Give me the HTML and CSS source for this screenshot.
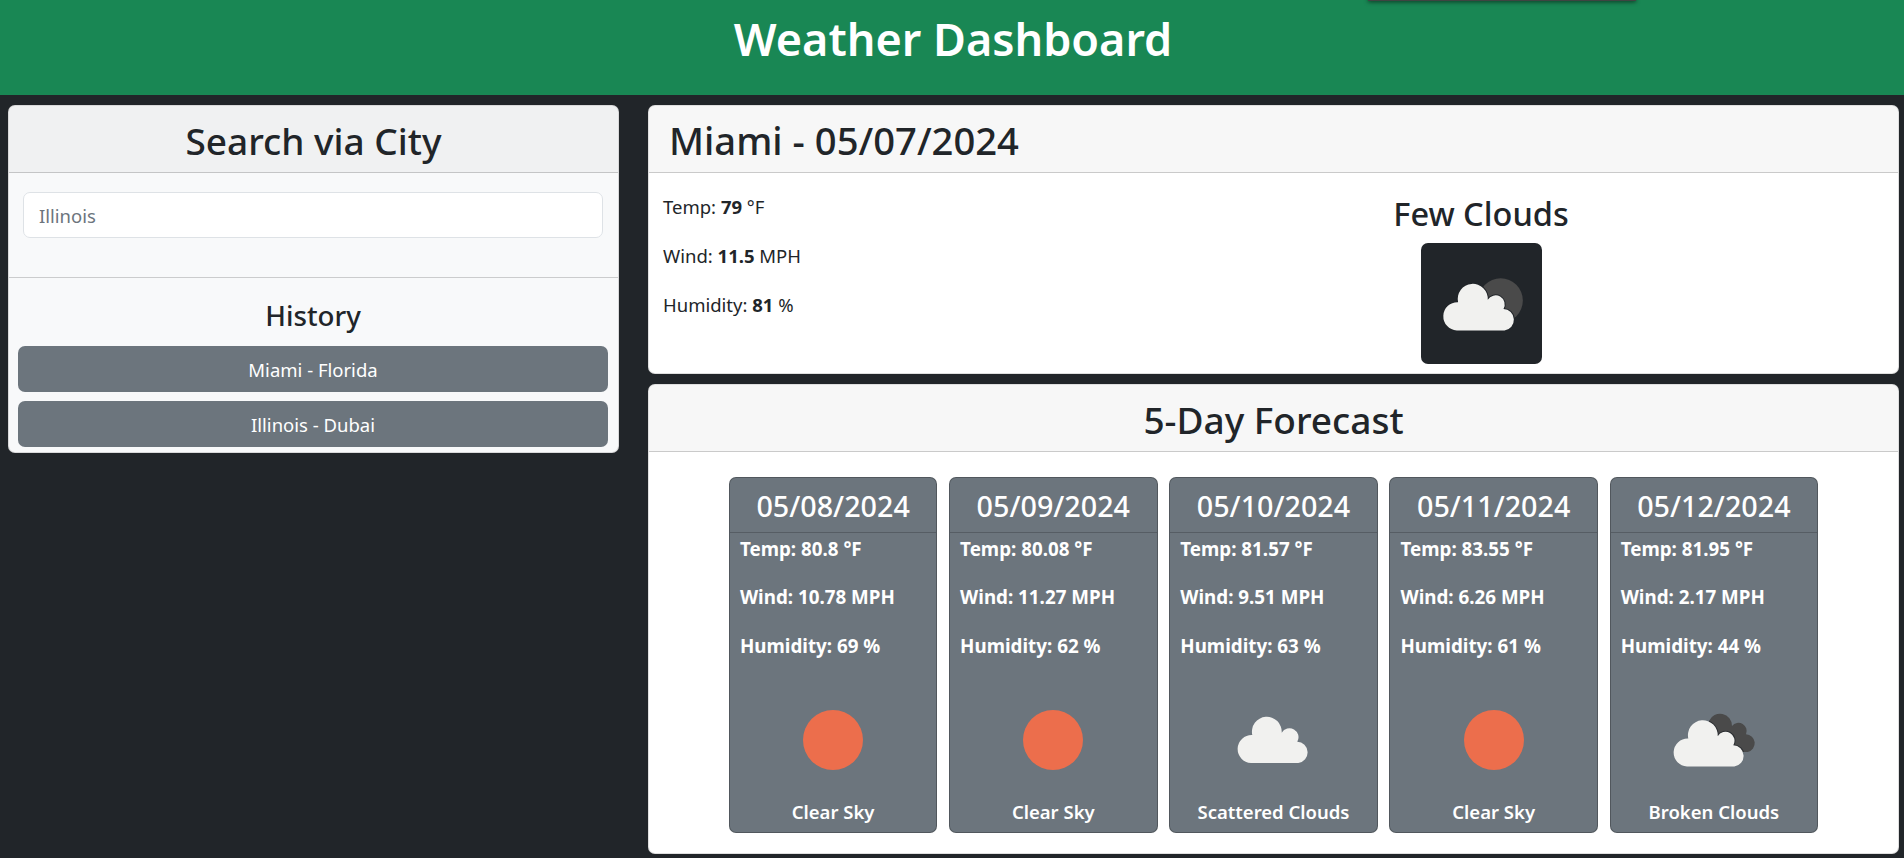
FILE: index.html
```html
<!DOCTYPE html>
<html lang="en">
<head>
  <meta charset="UTF-8" />
  <meta name="viewport" content="width=device-width, initial-scale=1.0"/>
  <title>Weather Dashboard</title>
  <link rel="stylesheet" href="styles.css">
</head>
<body>
  <svg class="icon-defs" width="0" height="0" aria-hidden="true">
    <defs>
      <path id="cloud-shape" d="M38 83A14 14 0 0 1 39.3 55A14.9 14.9 0 1 1 68.7 52.7A9 9 0 0 1 84.3 61.7A10.7 10.7 0 0 1 85.3 83Z"/>
      <path id="back-shape" d="M55 41A12 12 0 0 1 78 46A8.2 8.2 0 0 1 92 54.3A8.9 8.9 0 0 1 93.7 71.9H60Z"/>
      <clipPath id="back-clip">
        <use href="#back-shape"/>
      </clipPath>
    </defs>
    <symbol id="sun" viewBox="0 0 120 120">
      <circle cx="60" cy="60" r="30" fill="#ec6e4c"/>
    </symbol>
    <symbol id="cloud" viewBox="0 0 120 120">
      <use href="#cloud-shape" fill="#f1f1ef"/>
    </symbol>
    <symbol id="few" viewBox="0 0 120 120">
      <circle cx="79" cy="57" r="22" fill="#4a4a4a"/>
      <g transform="translate(-2.5 3.7)">
        <use href="#cloud-shape" fill="#212529" stroke="#212529" stroke-width="2"/>
        <use href="#cloud-shape" fill="#f1f1ef"/>
      </g>
    </symbol>
    <symbol id="broken" viewBox="0 0 120 120">
      <use href="#back-shape" fill="#4a4a4a"/>
      <g clip-path="url(#back-clip)">
        <use href="#cloud-shape" transform="translate(-5 3.5)" fill="#2c2f32" stroke="#2c2f32" stroke-width="2"/>
      </g>
      <use href="#cloud-shape" transform="translate(-5 3.5)" fill="#f1f1ef"/>
    </symbol>
  </svg>

  <header class="topbar">
    <h1>Weather Dashboard</h1>
    <div class="toast-edge"></div>
  </header>

  <main class="layout">
    <aside class="card search-card">
      <h2 class="card-title center">Search via City</h2>
      <div class="search-body">
        <input class="search-input" type="text" placeholder="Illinois">
      </div>
      <div class="history">
        <h3>History</h3>
        <button class="history-btn">Miami - Florida</button>
        <button class="history-btn">Illinois - Dubai</button>
      </div>
    </aside>

    <section class="results">
      <div class="card current">
        <h2 class="card-title city-title">Miami - 05/07/2024</h2>
        <div class="current-body">
          <div class="current-stats">
            <p>Temp: <b>79</b> °F</p>
            <p>Wind: <b>11.5</b> MPH</p>
            <p>Humidity: <b>81</b> %</p>
          </div>
          <div class="current-sky">
            <h3>Few Clouds</h3>
            <svg class="sky-box"><use href="#few"/></svg>
          </div>
        </div>
      </div>

      <div class="card forecast">
        <h2 class="card-title center">5-Day Forecast</h2>
        <div class="forecast-row">
          <article class="day">
            <h3>05/08/2024</h3>
            <div class="day-stats">
              <p>Temp: 80.8 °F</p>
              <p>Wind: 10.78 MPH</p>
              <p>Humidity: 69 %</p>
            </div>
            <svg class="day-icon"><use href="#sun"/></svg>
            <p class="day-sky">Clear Sky</p>
          </article>
          <article class="day">
            <h3>05/09/2024</h3>
            <div class="day-stats">
              <p>Temp: 80.08 °F</p>
              <p>Wind: 11.27 MPH</p>
              <p>Humidity: 62 %</p>
            </div>
            <svg class="day-icon"><use href="#sun"/></svg>
            <p class="day-sky">Clear Sky</p>
          </article>
          <article class="day">
            <h3>05/10/2024</h3>
            <div class="day-stats">
              <p>Temp: 81.57 °F</p>
              <p>Wind: 9.51 MPH</p>
              <p>Humidity: 63 %</p>
            </div>
            <svg class="day-icon"><use href="#cloud"/></svg>
            <p class="day-sky">Scattered Clouds</p>
          </article>
          <article class="day">
            <h3>05/11/2024</h3>
            <div class="day-stats">
              <p>Temp: 83.55 °F</p>
              <p>Wind: 6.26 MPH</p>
              <p>Humidity: 61 %</p>
            </div>
            <svg class="day-icon"><use href="#sun"/></svg>
            <p class="day-sky">Clear Sky</p>
          </article>
          <article class="day">
            <h3>05/12/2024</h3>
            <div class="day-stats">
              <p>Temp: 81.95 °F</p>
              <p>Wind: 2.17 MPH</p>
              <p>Humidity: 44 %</p>
            </div>
            <svg class="day-icon"><use href="#broken"/></svg>
            <p class="day-sky">Broken Clouds</p>
          </article>
        </div>
      </div>
    </section>
  </main>
</body>
</html>
```

FILE: styles.css
```css
body {
  font-family: "Noto Sans", sans-serif;
  font-size: 18.5px;
  line-height: 28.8px;
  background: #212529;
  color: #212529;
  margin: 0;
  height: 858px;
  overflow: hidden;
}
h1, h2, h3, p {
  margin: 0;
  font-weight: 500;
}
.icon-defs {
  position: absolute;
}
.topbar {
  position: relative;
  height: 95px;
  background: #198754;
  color: #fff;
  text-align: center;
}
.topbar h1 {
  padding-left: 2px;
  font-size: 45px;
  font-weight: 600;
  line-height: 78px;
}
.toast-edge {
  position: absolute;
  top: -3px;
  left: 1368px;
  width: 268px;
  height: 4px;
  background: #3f4441;
  box-shadow: 0 1px 4px rgba(0, 0, 0, .6);
}
.layout {
  display: flex;
  gap: 29px;
  padding: 10px 5px 0 8px;
}
.card {
  background: #fff;
  border: 1px solid rgba(0, 0, 0, .125);
  border-radius: 7px;
  overflow: hidden;
}
.card-title {
  height: 67px;
  box-sizing: border-box;
  font-size: 37px;
  line-height: 69px;
  padding: 0 20px;
  background: rgba(0, 0, 0, .03);
  border-bottom: 1px solid rgba(0, 0, 0, .18);
}
.city-title {
  font-size: 38.2px;
}
.center {
  text-align: center;
}
.search-card {
  flex: 0 0 611px;
  height: 348px;
  background: #f8f9fa;
  box-sizing: border-box;
}
.search-body {
  height: 105px;
  padding: 19px 15px 0 14px;
  box-sizing: border-box;
  border-bottom: 1px solid rgba(0, 0, 0, .18);
}
.search-input {
  display: block;
  width: 100%;
  height: 46px;
  box-sizing: border-box;
  padding: 0 15px;
  font: inherit;
  background: #fff;
  border: 1px solid #dee2e6;
  border-radius: 7px;
}
.search-input::placeholder {
  color: #6c757d;
}
.history {
  padding: 0 10px 0 9px;
}
.history h3 {
  font-size: 27.7px;
  line-height: 40px;
  padding-top: 17px;
  margin-bottom: 11px;
  text-align: center;
}
.history-btn {
  display: block;
  width: 100%;
  height: 46px;
  margin-bottom: 9px;
  padding: 2px 0 0;
  font: inherit;
  color: #fff;
  background: #6c757d;
  border: 0;
  border-radius: 7px;
}
.results {
  flex: 1;
  display: flex;
  flex-direction: column;
  gap: 10px;
}
.current {
  height: 269px;
  box-sizing: border-box;
}
.current-body {
  display: flex;
  padding: 20px 15px 0 14px;
}
.current-stats {
  flex: 0 0 416px;
}
.current-stats p {
  margin-bottom: 20px;
  font-weight: 400;
}
.current-stats b {
  font-weight: 700;
}
.current-sky {
  flex: 1;
  margin-top: -1px;
  text-align: center;
}
.current-sky h3 {
  font-size: 32.5px;
  line-height: 44px;
}
.sky-box {
  display: block;
  width: 121px;
  height: 121px;
  margin: 7px auto 0;
  background: #212529;
  border-radius: 7px;
}
.forecast {
  height: 470px;
  box-sizing: border-box;
}
.forecast-row {
  display: flex;
  justify-content: center;
  gap: 11.8px;
  padding-top: 25px;
}
.day {
  width: 208.4px;
  height: 356px;
  box-sizing: border-box;
  color: #fff;
  background: #6c757d;
  border: 1px solid rgba(0, 0, 0, .25);
  border-radius: 7px;
  text-align: center;
}
.day h3 {
  height: 54px;
  box-sizing: content-box;
  font-size: 28.7px;
  line-height: 56px;
  border-bottom: 1px solid rgba(0, 0, 0, .2);
}
.day-stats {
  padding: 2px 9px 0 10px;
  font-size: 18.8px;
  text-align: left;
}
.day-stats p {
  margin-bottom: 19.6px;
  font-weight: 700;
}
.day-icon {
  display: block;
  width: 120px;
  height: 120px;
  margin: 2px auto 0;
}
.day-sky {
  margin-top: -2px;
  font-weight: 600;
}
```
